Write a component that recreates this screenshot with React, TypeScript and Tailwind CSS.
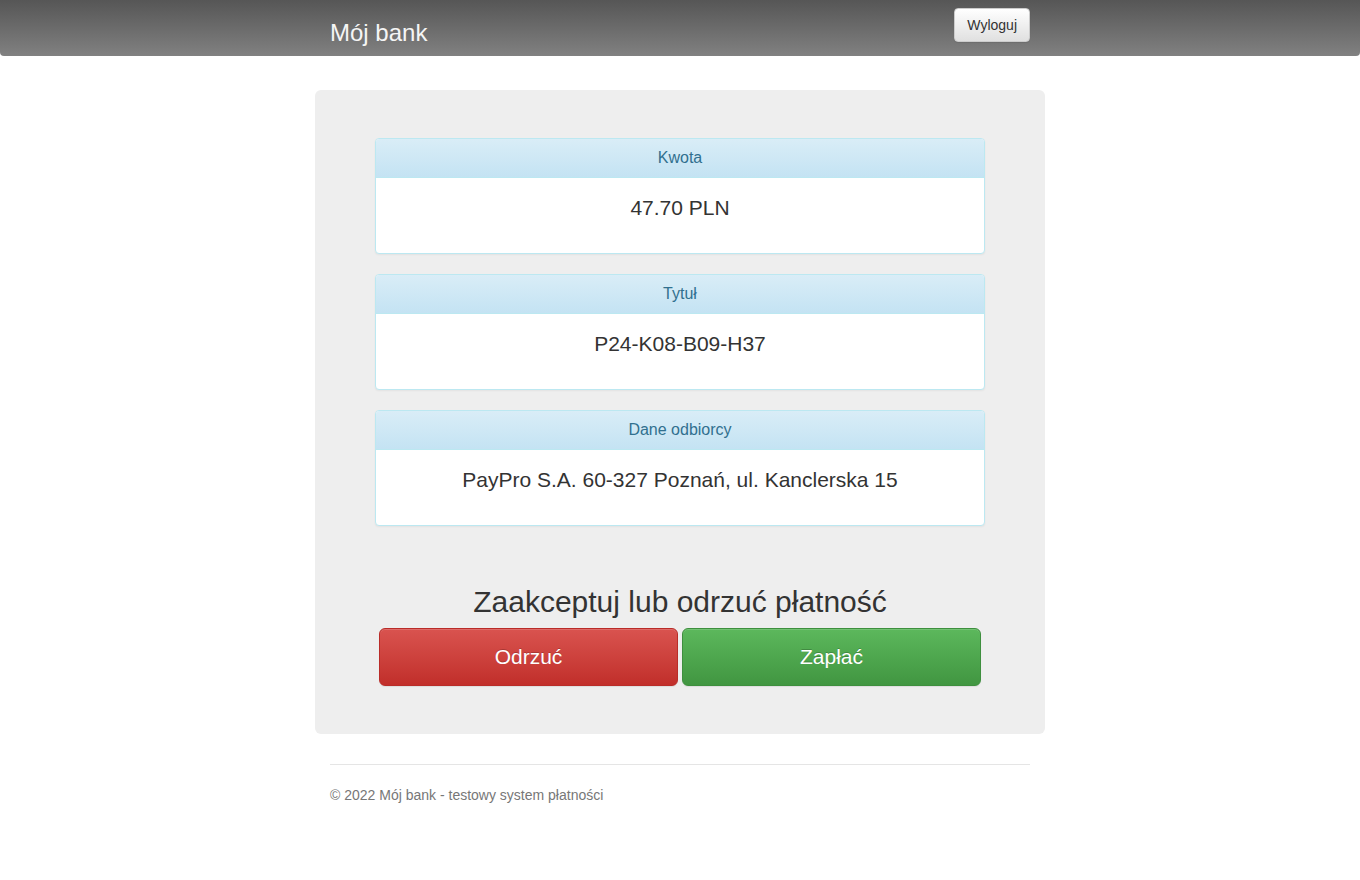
import React from "react";

const font = { fontFamily: '"Liberation Sans", Arial, Helvetica, sans-serif' };

function Panel({ title, value }: { title: string; value: string }) {
  return (
    <div className="mb-[20px] rounded-[4px] border border-[#bce8f1] bg-white shadow-[0_1px_2px_rgba(0,0,0,0.05)]">
      <div className="h-[39px] rounded-t-[3px] border-b border-[#bce8f1] bg-gradient-to-b from-[#d9edf7] to-[#c4e3f3] px-[15px] text-center text-[16px] leading-[38px] text-[#31708f]">
        {title}
      </div>
      <div className="px-[15px] pt-[15px] pb-[30px] text-center text-[21px] leading-[30px] text-[#333]">
        {value}
      </div>
    </div>
  );
}

export default function App() {
  return (
    <div className="min-h-[880px] bg-white" style={font}>
      <nav className="h-[56px] rounded-b-[4px] bg-gradient-to-b from-[#565656] to-[#818181]">
        <div className="mx-auto flex w-[730px] items-start justify-between px-[15px]">
          <div className="pt-[17px] text-[24px] leading-[32px] text-[#f5f5f5]">Mój bank</div>
          <button className="mt-[8px] h-[34px] rounded-[4px] border border-[#ccc] bg-gradient-to-b from-white to-[#e0e0e0] px-[12px] text-[14px] leading-[20px] text-[#333] shadow-[0_1px_1px_rgba(0,0,0,0.08)]">
            Wyloguj
          </button>
        </div>
      </nav>

      <div className="mx-auto mt-[34px] w-[730px]">
        <div className="rounded-[6px] bg-[#eeeeee] px-[60px] pt-[48px] pb-[48px]">
          <Panel title="Kwota" value="47.70 PLN" />
          <Panel title="Tytuł" value="P24-K08-B09-H37" />
          <Panel title="Dane odbiorcy" value="PayPro S.A. 60-327 Poznań, ul. Kanclerska 15" />

          <h2 className="mt-[59px] text-center text-[30px] leading-[33px] text-[#333]">
            Zaakceptuj lub odrzuć płatność
          </h2>
          <div className="mt-[10px] flex justify-center gap-[4px]">
            <button className="h-[58px] w-[299px] rounded-[6px] border border-[#b92c28] bg-gradient-to-b from-[#d9534f] to-[#c12e2a] text-[21px] leading-[30px] text-white [text-shadow:0_-1px_0_rgba(0,0,0,0.2)] shadow-[inset_0_1px_0_rgba(255,255,255,0.15),0_1px_1px_rgba(0,0,0,0.075)]">
              Odrzuć
            </button>
            <button className="h-[58px] w-[299px] rounded-[6px] border border-[#3e8f3e] bg-gradient-to-b from-[#5cb85c] to-[#419641] text-[21px] leading-[30px] text-white [text-shadow:0_-1px_0_rgba(0,0,0,0.2)] shadow-[inset_0_1px_0_rgba(255,255,255,0.15),0_1px_1px_rgba(0,0,0,0.075)]">
              Zapłać
            </button>
          </div>
        </div>

        <div className="mx-[15px] mt-[30px] border-t border-[#e5e5e5] pt-[20px] text-[14px] leading-[20px] text-[#777]">
          © 2022 Mój bank - testowy system płatności
        </div>
      </div>
    </div>
  );
}
